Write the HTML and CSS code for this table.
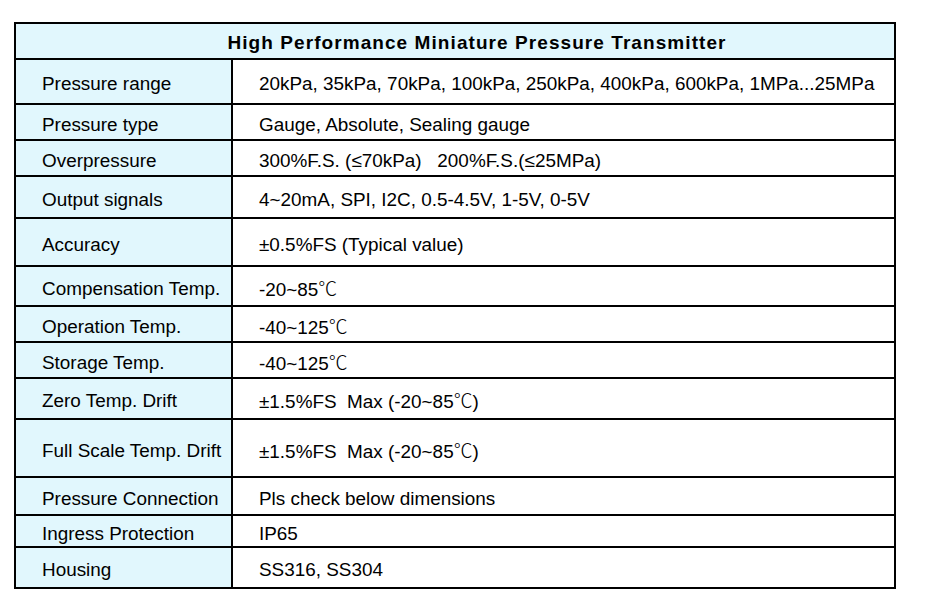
FILE: index.html
```html
<!DOCTYPE html>
<html lang="en">
<head>
<meta charset="utf-8">
<title>High Performance Miniature Pressure Transmitter</title>
<link rel="stylesheet" href="styles.css">
</head>
<body>
<table class="spec">
  <colgroup>
    <col class="col-label">
    <col class="col-value">
  </colgroup>
  <thead>
    <tr class="h36">
      <th colspan="2" class="title">High Performance Miniature Pressure Transmitter</th>
    </tr>
  </thead>
  <tbody>
    <tr class="h45"><td class="label">Pressure range</td><td class="value">20kPa, 35kPa, 70kPa, 100kPa, 250kPa, 400kPa, 600kPa, 1MPa...25MPa</td></tr>
    <tr class="h36"><td class="label">Pressure type</td><td class="value">Gauge, Absolute, Sealing gauge</td></tr>
    <tr class="h36"><td class="label">Overpressure</td><td class="value">300%F.S. (≤70kPa)&nbsp;&nbsp; 200%F.S.(≤25MPa)</td></tr>
    <tr class="h42"><td class="label">Output signals</td><td class="value">4~20mA, SPI, I2C, 0.5-4.5V, 1-5V, 0-5V</td></tr>
    <tr class="h48"><td class="label">Accuracy</td><td class="value">±0.5%FS (Typical value)</td></tr>
    <tr class="h40"><td class="label">Compensation Temp.</td><td class="value">-20~85<span class="cjk">℃</span></td></tr>
    <tr class="h36"><td class="label">Operation Temp.</td><td class="value">-40~125<span class="cjk">℃</span></td></tr>
    <tr class="h36"><td class="label">Storage Temp.</td><td class="value">-40~125<span class="cjk">℃</span></td></tr>
    <tr class="h41"><td class="label">Zero Temp. Drift</td><td class="value">±1.5%FS&nbsp; Max (-20~85<span class="cjk">℃</span>)</td></tr>
    <tr class="h58"><td class="label">Full Scale Temp. Drift</td><td class="value">±1.5%FS&nbsp; Max (-20~85<span class="cjk">℃</span>)</td></tr>
    <tr class="h38"><td class="label">Pressure Connection</td><td class="value">Pls check below dimensions</td></tr>
    <tr class="h32"><td class="label">Ingress Protection</td><td class="value">IP65</td></tr>
    <tr class="h41"><td class="label">Housing</td><td class="value">SS316, SS304</td></tr>
  </tbody>
</table>
</body>
</html>
```
FILE: styles.css
```css
html, body {
  margin: 0;
  padding: 0;
  background: #ffffff;
}

body {
  font-family: "Liberation Sans", Arial, "Noto Sans CJK SC", sans-serif;
  color: #000000;
}

.spec {
  margin: 22px 0 0 14px;
  width: 882px;
  table-layout: fixed;
  border-collapse: separate;
  border-spacing: 0;
  border-top: 2px solid #000;
  border-left: 2px solid #000;
  font-size: 18.9px;
}

.col-label { width: 217px; }
.col-value { width: 663px; }

.spec th,
.spec td {
  box-sizing: border-box;
  border-right: 2px solid #000;
  border-bottom: 2px solid #000;
  vertical-align: middle;
  white-space: nowrap;
  line-height: 20px;
  padding-top: 5px;
  padding-bottom: 0;
}

.spec .title {
  background: #e1f7fd;
  font-weight: bold;
  font-size: 19px;
  letter-spacing: 1.07px;
  text-align: center;
  padding-left: 44px;
  padding-right: 0;
  padding-top: 3px;
}

.label {
  background: #e1f7fd;
  padding-left: 26px;
  padding-right: 0;
  text-align: left;
}

.value {
  background: #ffffff;
  padding-left: 26px;
  padding-right: 0;
  text-align: left;
}

.cjk {
  font-family: "Noto Sans CJK SC", sans-serif;
  font-weight: 300;
}

.h32 > * { height: 32px; }
.h36 > * { height: 36px; }
.h38 > * { height: 38px; }
.h40 > * { height: 40px; }
.h41 > * { height: 41px; }
.h42 > * { height: 42px; }
.h45 > * { height: 45px; }
.h48 > * { height: 48px; }
.h58 > * { height: 58px; }
```
